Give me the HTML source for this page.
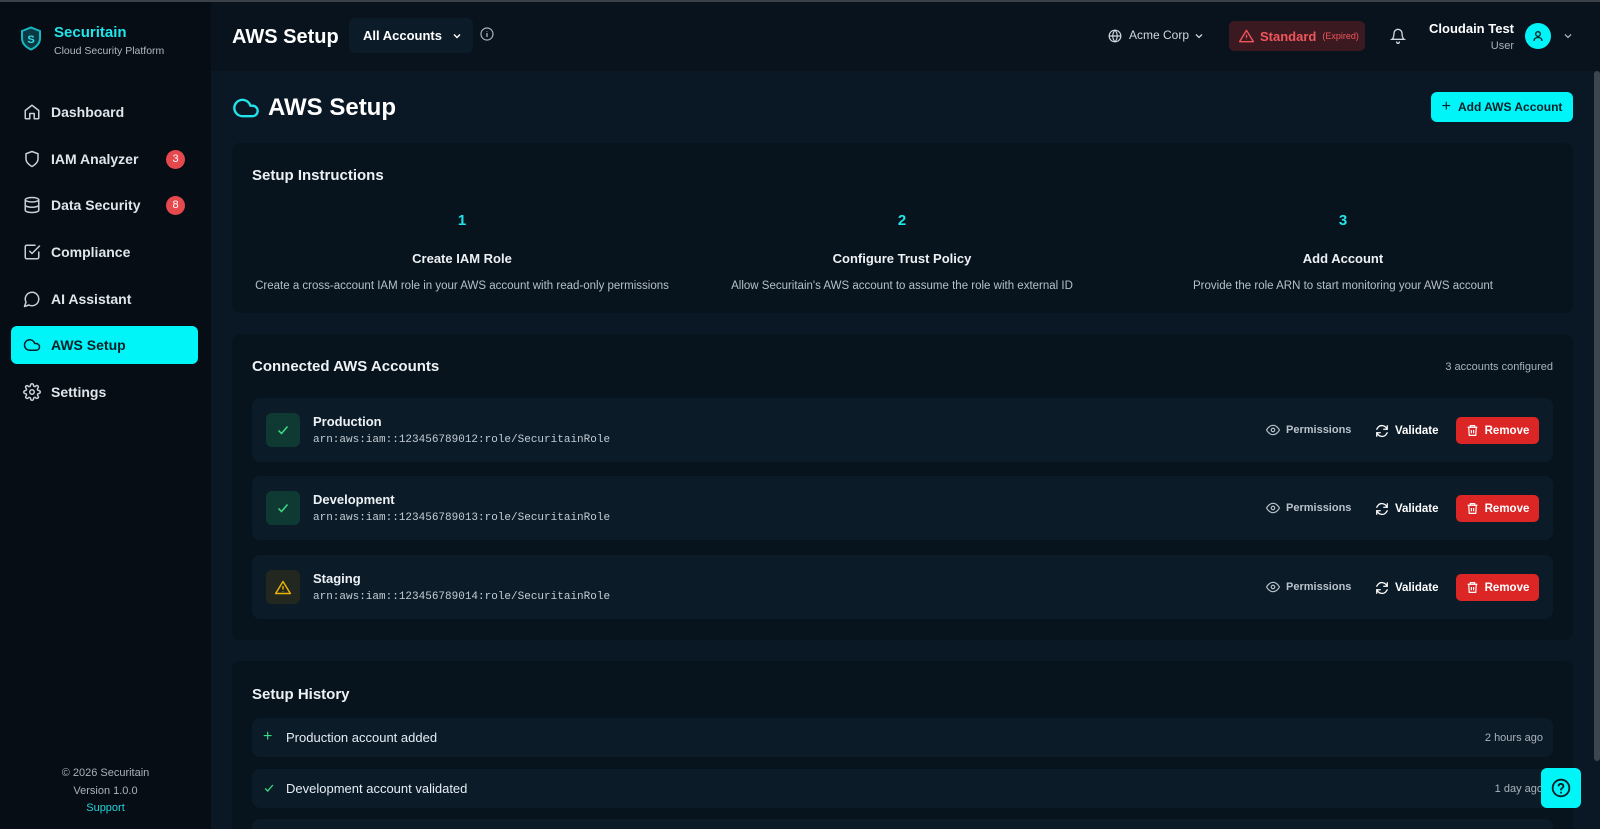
<!DOCTYPE html>
<html><head><meta charset="utf-8">
<style>
*{box-sizing:border-box;margin:0;padding:0}
html,body{width:1600px;height:829px;overflow:hidden}
body{background:#0a1825;font-family:"Liberation Sans",sans-serif;color:#e6edf3;position:relative}
.abs{position:absolute}
.topline{left:0;top:0;width:1600px;height:2px;background:#3a4148}
.side{left:0;top:2px;width:211px;height:827px;background:#060d14}
.hdr{left:211px;top:2px;width:1389px;height:69px;background:#08131d}
svg{display:block}
.nav{left:11px;width:187px;height:38px;border-radius:6px;display:flex;align-items:center;padding-left:12px;font-size:14px;font-weight:bold;color:#dfe6ec}
.nav svg{margin-right:10px}
.badge{position:absolute;left:155px;width:19px;height:19px;border-radius:50%;background:#e5484d;color:#fff;font-size:11px;font-weight:normal;display:flex;align-items:center;justify-content:center}
.card{left:232px;width:1341px;background:#07131d;border-radius:8px}
.h2{font-size:15px;font-weight:bold;color:#eef2f5}
.step{position:absolute;width:440px;text-align:center}
.step .n{color:#22e5ec;font-weight:bold;font-size:15px}
.step .t{font-weight:bold;font-size:13px;margin-top:22px;color:#eef2f5}
.step .d{font-size:11.5px;color:#b6c0c8;margin-top:14px}
.row{left:252px;width:1301px;height:64px;background:#0b1b28;border-radius:8px}
.ib{position:absolute;left:14px;top:15px;width:34px;height:34px;border-radius:6px;display:flex;align-items:center;justify-content:center}
.nm{position:absolute;left:61px;top:16px;font-size:13px;font-weight:bold;color:#eef2f5}
.arn{position:absolute;left:61px;top:36px;font-family:"Liberation Mono",monospace;font-size:11px;color:#c3ccd3}
.perm{position:absolute;left:1014px;top:25px;font-size:11px;color:#b8c2ca;display:flex;align-items:center;gap:6px;font-weight:bold}
.val{position:absolute;left:1113px;top:19px;height:27px;padding:0 10px;font-size:11.5px;color:#fff;display:flex;align-items:center;gap:6px;font-weight:bold}
.rem{position:absolute;left:1204px;top:19px;width:83px;height:27px;background:#dc2626;border-radius:5px;font-size:11.5px;color:#fff;display:flex;align-items:center;justify-content:center;gap:6px;font-weight:bold}
.hrow{left:252px;width:1301px;height:39px;background:#0b1b28;border-radius:8px;font-size:13px;color:#e6edf3}
</style></head><body>
<div class="abs topline"></div>
<div class="abs side"></div>
<div class="abs hdr"></div>

<svg class="abs" style="left:20px;top:26px" width="22" height="25" viewBox="0 0 22 25"><path d="M11 1.5 L20 5 V12 C20 18 15.5 21.5 11 23.5 C6.5 21.5 2 18 2 12 V5 Z" fill="#0b3a44" stroke="#18b8c2" stroke-width="2"/><text x="11" y="17" text-anchor="middle" font-family="Liberation Sans" font-weight="bold" font-size="11" fill="#2fe0e8">S</text></svg>
<div class="abs" style="left:54px;top:24px;font-size:15px;font-weight:bold;color:#22e5ec">Securitain</div>
<div class="abs" style="left:54px;top:45px;font-size:10.5px;color:#b1bac2">Cloud Security Platform</div>

<div class="abs nav" style="top:93px"><svg width="18" height="18" viewBox="0 0 24 24" fill="none" stroke="#c9d1d8" stroke-width="2" stroke-linecap="round" stroke-linejoin="round"><path d="M3 10l9-7 9 7v10a1 1 0 0 1-1 1h-5v-7h-6v7H4a1 1 0 0 1-1-1z"/></svg>Dashboard</div>
<div class="abs nav" style="top:140px"><svg width="18" height="18" viewBox="0 0 24 24" fill="none" stroke="#c9d1d8" stroke-width="2" stroke-linecap="round" stroke-linejoin="round"><path d="M12 22s8-4 8-10V5l-8-3-8 3v7c0 6 8 10 8 10z"/></svg>IAM Analyzer<span class="badge">3</span></div>
<div class="abs nav" style="top:186px"><svg width="18" height="18" viewBox="0 0 24 24" fill="none" stroke="#c9d1d8" stroke-width="2" stroke-linecap="round" stroke-linejoin="round"><ellipse cx="12" cy="5" rx="9" ry="3"/><path d="M3 5v14c0 1.7 4 3 9 3s9-1.3 9-3V5"/><path d="M3 12c0 1.7 4 3 9 3s9-1.3 9-3"/></svg>Data Security<span class="badge">8</span></div>
<div class="abs nav" style="top:233px"><svg width="18" height="18" viewBox="0 0 24 24" fill="none" stroke="#c9d1d8" stroke-width="2" stroke-linecap="round" stroke-linejoin="round"><path d="M9 11l3 3L22 4"/><path d="M21 12v7a2 2 0 0 1-2 2H5a2 2 0 0 1-2-2V5a2 2 0 0 1 2-2h11"/></svg>Compliance</div>
<div class="abs nav" style="top:280px"><svg width="18" height="18" viewBox="0 0 24 24" fill="none" stroke="#c9d1d8" stroke-width="2" stroke-linecap="round" stroke-linejoin="round"><path d="M7.9 20A9 9 0 1 0 4 16.1L2 22z"/></svg>AI Assistant</div>
<div class="abs nav" style="top:326px;background:#00f5f8;color:#062028"><svg width="18" height="18" viewBox="0 0 24 24" fill="none" stroke="#062028" stroke-width="2" stroke-linecap="round" stroke-linejoin="round"><path d="M17.5 19H9a7 7 0 1 1 6.7-9h1.8a4.5 4.5 0 1 1 0 9z"/></svg>AWS Setup</div>
<div class="abs nav" style="top:373px"><svg width="18" height="18" viewBox="0 0 24 24" fill="none" stroke="#c9d1d8" stroke-width="2" stroke-linecap="round" stroke-linejoin="round"><circle cx="12" cy="12" r="3"/><path d="M19.4 15a1.7 1.7 0 0 0 .3 1.8l.1.1a2 2 0 1 1-2.8 2.8l-.1-.1a1.7 1.7 0 0 0-1.8-.3 1.7 1.7 0 0 0-1 1.5V21a2 2 0 1 1-4 0v-.1a1.7 1.7 0 0 0-1.1-1.5 1.7 1.7 0 0 0-1.8.3l-.1.1a2 2 0 1 1-2.8-2.8l.1-.1a1.7 1.7 0 0 0 .3-1.8 1.7 1.7 0 0 0-1.5-1H3a2 2 0 1 1 0-4h.1a1.7 1.7 0 0 0 1.5-1.1 1.7 1.7 0 0 0-.3-1.8l-.1-.1a2 2 0 1 1 2.8-2.8l.1.1a1.7 1.7 0 0 0 1.8.3H9a1.7 1.7 0 0 0 1-1.5V3a2 2 0 1 1 4 0v.1a1.7 1.7 0 0 0 1 1.5 1.7 1.7 0 0 0 1.8-.3l.1-.1a2 2 0 1 1 2.8 2.8l-.1.1a1.7 1.7 0 0 0-.3 1.8V9a1.7 1.7 0 0 0 1.5 1H21a2 2 0 1 1 0 4h-.1a1.7 1.7 0 0 0-1.5 1z"/></svg>Settings</div>

<div class="abs" style="left:0;width:211px;top:764px;text-align:center;font-size:11px;color:#aab3bb;line-height:18px">© 2026 Securitain<br>Version 1.0.0</div>
<div class="abs" style="left:0;width:211px;top:802px;text-align:center;font-size:11px;color:#22d3da">Support</div>

<div class="abs" style="left:232px;top:26px;font-size:20px;font-weight:bold;color:#fff">AWS Setup</div>
<div class="abs" style="left:349px;top:18px;width:124px;height:35px;background:#0b1b28;border-radius:6px;display:flex;align-items:center;padding-left:14px;font-size:13px;font-weight:bold;color:#fff">All Accounts<svg style="margin-left:10px" width="10" height="10" viewBox="0 0 10 10"><path d="M2 3.5l3 3 3-3" fill="none" stroke="#fff" stroke-width="1.4"/></svg></div>
<svg class="abs" style="left:480px;top:27px" width="14" height="14" viewBox="0 0 14 14"><circle cx="7" cy="7" r="6" fill="none" stroke="#aab3bb" stroke-width="1.2"/><path d="M7 6v4M7 4v.5" stroke="#aab3bb" stroke-width="1.3"/></svg>

<svg class="abs" style="left:1108px;top:29px" width="14" height="14" viewBox="0 0 24 24" fill="none" stroke="#d0d7dd" stroke-width="2"><circle cx="12" cy="12" r="10"/><path d="M2 12h20M12 2a15 15 0 0 1 0 20M12 2a15 15 0 0 0 0 20"/></svg>
<div class="abs" style="left:1129px;top:28px;font-size:12px;color:#d0d7dd">Acme Corp</div>
<svg class="abs" style="left:1194px;top:31px" width="10" height="10" viewBox="0 0 10 10"><path d="M2 3.5l3 3 3-3" fill="none" stroke="#d0d7dd" stroke-width="1.3"/></svg>

<div class="abs" style="left:1229px;top:21px;width:136px;height:30px;background:#3a1a20;border-radius:5px;display:flex;align-items:center;padding-left:10px;gap:6px">
<svg width="15" height="14" viewBox="0 0 24 22" fill="none" stroke="#f0565c" stroke-width="2.2" stroke-linejoin="round"><path d="M12 2L1 20h22z"/><path d="M12 9v5M12 16.5v.5"/></svg>
<span style="font-size:13px;font-weight:bold;color:#f0565c">Standard</span><span style="font-size:9px;color:#f0565c">(Expired)</span></div>

<svg class="abs" style="left:1390px;top:27px" width="16" height="18" viewBox="0 0 24 26" fill="none" stroke="#d0d7dd" stroke-width="2" stroke-linecap="round"><path d="M6 9a6 6 0 0 1 12 0c0 7 3 9 3 9H3s3-2 3-9"/><path d="M10 22a2 2 0 0 0 4 0"/></svg>
<div class="abs" style="left:1395px;top:21px;width:119px;text-align:right;font-size:13px;font-weight:bold;color:#fff">Cloudain Test</div>
<div class="abs" style="left:1395px;top:40px;width:119px;text-align:right;font-size:11px;color:#aab3bb">User</div>
<div class="abs" style="left:1525px;top:23px;width:26px;height:26px;border-radius:50%;background:#00f5f8;display:flex;align-items:center;justify-content:center"><svg width="12" height="12" viewBox="0 0 12 12" fill="none" stroke="#062028" stroke-width="1.3"><circle cx="6" cy="4" r="2.3"/><path d="M2 11c0-2.5 2-3.5 4-3.5s4 1 4 3.5"/></svg></div>
<svg class="abs" style="left:1563px;top:31px" width="10" height="10" viewBox="0 0 10 10"><path d="M2 3.5l3 3 3-3" fill="none" stroke="#aab3bb" stroke-width="1.3"/></svg>

<div class="abs" style="left:1594px;top:71px;width:6px;height:690px;background:#3b4650;border-radius:3px"></div>

<svg class="abs" style="left:232px;top:96px" width="28" height="24" viewBox="0 0 24 20" fill="none" stroke="#22e5ec" stroke-width="2" stroke-linecap="round" stroke-linejoin="round"><path d="M17.5 17H9a7 7 0 1 1 6.7-9h1.8a4.5 4.5 0 1 1 0 9z"/></svg>
<div class="abs" style="left:268px;top:94px;font-size:24px;font-weight:bold;color:#fff">AWS Setup</div>
<div class="abs" style="left:1431px;top:92px;width:142px;height:30px;background:#00f5f8;border-radius:6px;display:flex;align-items:center;justify-content:center;gap:7px;font-size:12px;font-weight:bold;color:#062028"><span style="font-size:16px;font-weight:normal">+</span>Add AWS Account</div>

<div class="abs card" style="top:143px;height:170px">
<div class="h2 abs" style="left:20px;top:24px">Setup Instructions</div>
<div class="step" style="left:10px;top:69px"><div class="n">1</div><div class="t">Create IAM Role</div><div class="d">Create a cross-account IAM role in your AWS account with read-only permissions</div></div>
<div class="step" style="left:450px;top:69px"><div class="n">2</div><div class="t">Configure Trust Policy</div><div class="d">Allow Securitain's AWS account to assume the role with external ID</div></div>
<div class="step" style="left:891px;top:69px"><div class="n">3</div><div class="t">Add Account</div><div class="d">Provide the role ARN to start monitoring your AWS account</div></div>
</div>

<div class="abs card" style="top:334px;height:306px">
<div class="h2 abs" style="left:20px;top:24px">Connected AWS Accounts</div>
<div class="abs" style="right:20px;top:27px;font-size:11px;color:#aab3bb">3 accounts configured</div>
</div>

<div class="abs row" style="top:398px">
<div class="ib" style="background:#0f3a33"><svg width="14" height="14" viewBox="0 0 14 14"><path d="M2.5 7.5l3 3 6-7" fill="none" stroke="#3ddc84" stroke-width="1.5"/></svg></div>
<div class="nm">Production</div><div class="arn">arn:aws:iam::123456789012:role/SecuritainRole</div>
<div class="perm"><svg width="14" height="14" viewBox="0 0 24 24" fill="none" stroke="#b8c2ca" stroke-width="2"><path d="M1 12s4-8 11-8 11 8 11 8-4 8-11 8-11-8-11-8z"/><circle cx="12" cy="12" r="3"/></svg>Permissions</div>
<div class="val"><svg width="14" height="14" viewBox="0 0 24 24" fill="none" stroke="#fff" stroke-width="2.2" stroke-linecap="round"><path d="M21 3v6h-6M3 21v-6h6"/><path d="M20.5 9A9 9 0 0 0 5 6L3 9M3.5 15A9 9 0 0 0 19 18l2-3"/></svg>Validate</div>
<div class="rem"><svg width="13" height="13" viewBox="0 0 24 24" fill="none" stroke="#fff" stroke-width="2.2"><path d="M3 6h18M8 6V3h8v3M5 6l1 15h12l1-15M10 11v6M14 11v6"/></svg>Remove</div>
</div>
<div class="abs row" style="top:476px">
<div class="ib" style="background:#0f3a33"><svg width="14" height="14" viewBox="0 0 14 14"><path d="M2.5 7.5l3 3 6-7" fill="none" stroke="#3ddc84" stroke-width="1.5"/></svg></div>
<div class="nm">Development</div><div class="arn">arn:aws:iam::123456789013:role/SecuritainRole</div>
<div class="perm"><svg width="14" height="14" viewBox="0 0 24 24" fill="none" stroke="#b8c2ca" stroke-width="2"><path d="M1 12s4-8 11-8 11 8 11 8-4 8-11 8-11-8-11-8z"/><circle cx="12" cy="12" r="3"/></svg>Permissions</div>
<div class="val"><svg width="14" height="14" viewBox="0 0 24 24" fill="none" stroke="#fff" stroke-width="2.2" stroke-linecap="round"><path d="M21 3v6h-6M3 21v-6h6"/><path d="M20.5 9A9 9 0 0 0 5 6L3 9M3.5 15A9 9 0 0 0 19 18l2-3"/></svg>Validate</div>
<div class="rem"><svg width="13" height="13" viewBox="0 0 24 24" fill="none" stroke="#fff" stroke-width="2.2"><path d="M3 6h18M8 6V3h8v3M5 6l1 15h12l1-15M10 11v6M14 11v6"/></svg>Remove</div>
</div>
<div class="abs row" style="top:555px">
<div class="ib" style="background:#22281f"><svg width="16" height="15" viewBox="0 0 24 22" fill="none" stroke="#eab308" stroke-width="2.2" stroke-linejoin="round"><path d="M12 2L1 20h22z"/><path d="M12 9v5M12 16.5v.5"/></svg></div>
<div class="nm">Staging</div><div class="arn">arn:aws:iam::123456789014:role/SecuritainRole</div>
<div class="perm"><svg width="14" height="14" viewBox="0 0 24 24" fill="none" stroke="#b8c2ca" stroke-width="2"><path d="M1 12s4-8 11-8 11 8 11 8-4 8-11 8-11-8-11-8z"/><circle cx="12" cy="12" r="3"/></svg>Permissions</div>
<div class="val"><svg width="14" height="14" viewBox="0 0 24 24" fill="none" stroke="#fff" stroke-width="2.2" stroke-linecap="round"><path d="M21 3v6h-6M3 21v-6h6"/><path d="M20.5 9A9 9 0 0 0 5 6L3 9M3.5 15A9 9 0 0 0 19 18l2-3"/></svg>Validate</div>
<div class="rem"><svg width="13" height="13" viewBox="0 0 24 24" fill="none" stroke="#fff" stroke-width="2.2"><path d="M3 6h18M8 6V3h8v3M5 6l1 15h12l1-15M10 11v6M14 11v6"/></svg>Remove</div>
</div>

<div class="abs card" style="top:661px;height:168px;border-bottom-left-radius:0;border-bottom-right-radius:0">
<div class="h2 abs" style="left:20px;top:25px">Setup History</div>
</div>
<div class="abs hrow" style="top:718px">
<span class="abs" style="left:11px;top:10px;color:#3ddc84;font-size:16px;line-height:18px">+</span>
<span class="abs" style="left:34px;top:12px">Production account added</span>
<span class="abs" style="right:10px;top:14px;font-size:11px;color:#aab3bb">2 hours ago</span></div>
<div class="abs hrow" style="top:769px">
<svg class="abs" style="left:11px;top:13px" width="12" height="12" viewBox="0 0 14 14"><path d="M2.5 7.5l3 3 6-7" fill="none" stroke="#3ddc84" stroke-width="1.5"/></svg>
<span class="abs" style="left:34px;top:12px">Development account validated</span>
<span class="abs" style="right:10px;top:14px;font-size:11px;color:#aab3bb">1 day ago</span></div>
<div class="abs hrow" style="top:819px;height:10px;border-bottom-left-radius:0;border-bottom-right-radius:0"></div>

<div class="abs" style="left:1541px;top:768px;width:40px;height:40px;background:#00f5f8;border-radius:6px;display:flex;align-items:center;justify-content:center"><svg width="20" height="20" viewBox="0 0 24 24" fill="none" stroke="#062028" stroke-width="2.2" stroke-linecap="round"><circle cx="12" cy="12" r="10"/><path d="M9.1 9a3 3 0 0 1 5.8 1c0 2-3 2.5-3 4"/><path d="M12 17.5v.2"/></svg></div>
</body></html>
